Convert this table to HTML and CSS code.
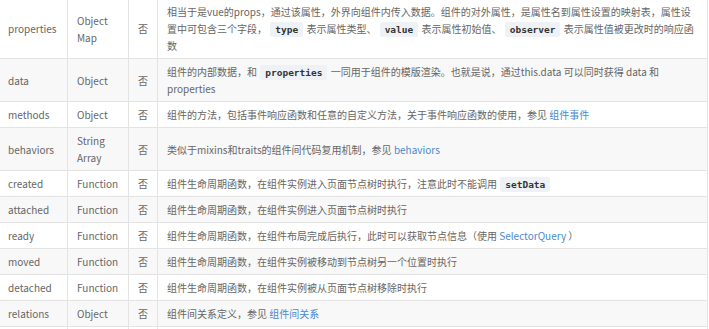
FILE: index.html
```html
<!DOCTYPE html>
<html lang="zh-CN">
<head>
<meta charset="utf-8">
<title>组件属性</title>
<link rel="stylesheet" href="styles.css">
</head>
<body>
<table class="props">
  <colgroup>
    <col class="c-name">
    <col class="c-type">
    <col class="c-req">
    <col class="c-desc">
  </colgroup>
  <tbody>
    <tr>
      <td>properties</td>
      <td>Object Map</td>
      <td>否</td>
      <td>相当于是vue的props，通过该属性，外界向组件内传入数据。组件的对外属性，是属性名到属性设置的映射表，属性设置中可包含三个字段， <code>type</code> 表示属性类型、 <code>value</code> 表示属性初始值、 <code>observer</code> 表示属性值被更改时的响应函数</td>
    </tr>
    <tr>
      <td>data</td>
      <td>Object</td>
      <td>否</td>
      <td>组件的内部数据，和 <code>properties</code> 一同用于组件的模版渲染。也就是说，通过this.data 可以同时获得 data 和 properties</td>
    </tr>
    <tr>
      <td>methods</td>
      <td>Object</td>
      <td>否</td>
      <td>组件的方法，包括事件响应函数和任意的自定义方法，关于事件响应函数的使用，参见 <a href="#">组件事件</a></td>
    </tr>
    <tr>
      <td>behaviors</td>
      <td>String Array</td>
      <td>否</td>
      <td>类似于mixins和traits的组件间代码复用机制，参见 <a href="#">behaviors</a></td>
    </tr>
    <tr>
      <td>created</td>
      <td>Function</td>
      <td>否</td>
      <td>组件生命周期函数，在组件实例进入页面节点树时执行，注意此时不能调用 <code>setData</code></td>
    </tr>
    <tr>
      <td>attached</td>
      <td>Function</td>
      <td>否</td>
      <td>组件生命周期函数，在组件实例进入页面节点树时执行</td>
    </tr>
    <tr>
      <td>ready</td>
      <td>Function</td>
      <td>否</td>
      <td>组件生命周期函数，在组件布局完成后执行，此时可以获取节点信息（使用 <a href="#">SelectorQuery</a> ）</td>
    </tr>
    <tr>
      <td>moved</td>
      <td>Function</td>
      <td>否</td>
      <td>组件生命周期函数，在组件实例被移动到节点树另一个位置时执行</td>
    </tr>
    <tr>
      <td>detached</td>
      <td>Function</td>
      <td>否</td>
      <td>组件生命周期函数，在组件实例被从页面节点树移除时执行</td>
    </tr>
    <tr>
      <td>relations</td>
      <td>Object</td>
      <td>否</td>
      <td>组件间关系定义，参见 <a href="#">组件间关系</a></td>
    </tr>
    <tr class="tail">
      <td>&nbsp;</td>
      <td>&nbsp;</td>
      <td>&nbsp;</td>
      <td>&nbsp;</td>
    </tr>
  </tbody>
</table>
</body>
</html>
```

FILE: styles.css
```css
html, body {
  margin: 0;
  padding: 0;
  background: #ffffff;
  overflow: hidden;
}

body {
  font-family: "Noto Sans CJK SC", "Noto Sans", sans-serif;
  font-size: 10px;
  line-height: 17px;
  color: #666666;
}

.props {
  border-collapse: collapse;
  table-layout: fixed;
  width: 709px;
  margin: -2px 0 0 -2px;
}

.c-name { width: 69px; }
.c-type { width: 61px; }
.c-req { width: 29px; }
.c-desc { width: 550px; }

.props td {
  border: 1px solid #e3e3e3;
  padding: 4px 9px;
  vertical-align: middle;
  word-wrap: break-word;
}

.props tr:nth-child(2n) {
  background: #f8f8f8;
}

.props code {
  font-family: "DejaVu Sans Mono", monospace;
  font-weight: bold;
  font-size: 9.5px;
  line-height: 1;
  color: #333333;
  background: #eef2f6;
  padding: 2px 5px;
  margin: 0 1px;
  border-radius: 2px;
}

.props a {
  color: #4a89d0;
  text-decoration: none;
}
```
